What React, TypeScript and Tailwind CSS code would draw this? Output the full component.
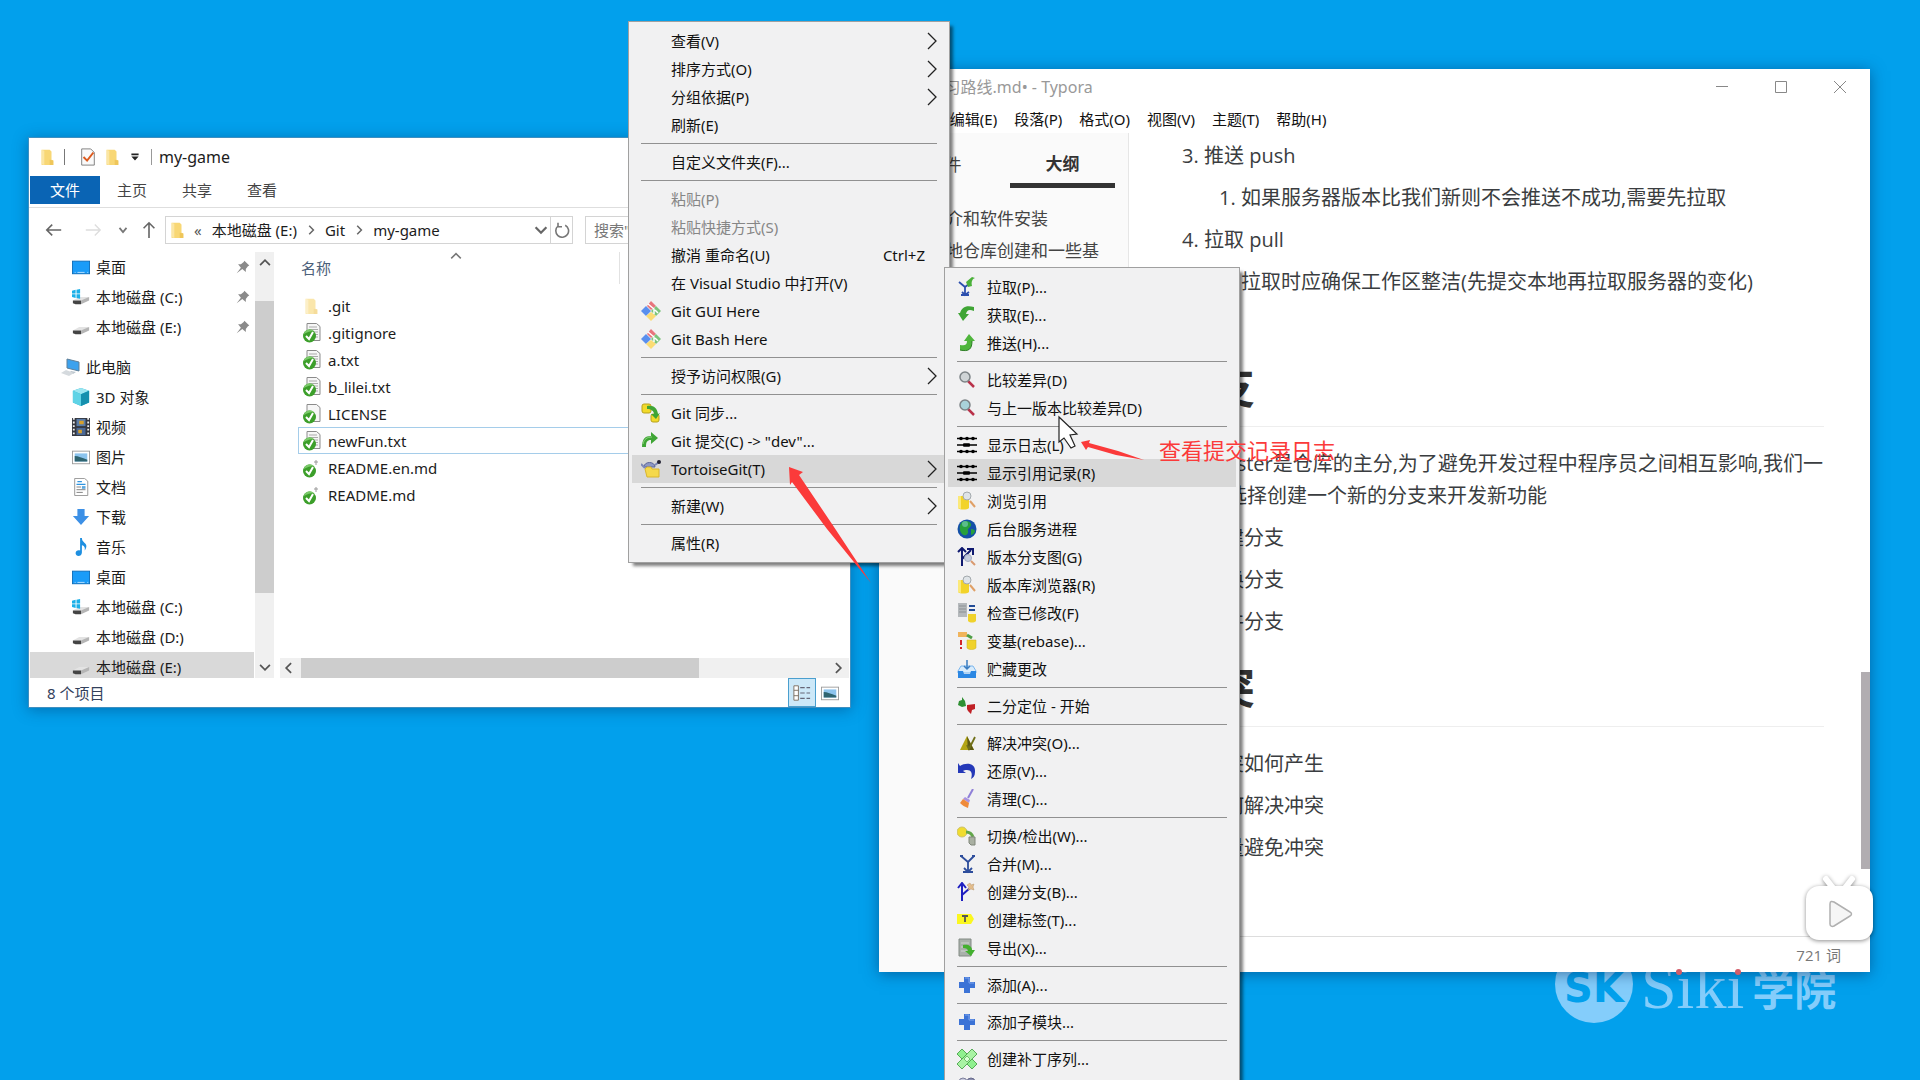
import type { ReactNode } from "react";

type IconProps = { children: ReactNode; className?: string };

const Icon = ({ children, className = "size-5" }: IconProps) => (
  <svg viewBox="0 0 20 20" fill="none" className={`${className} shrink-0`} aria-hidden="true">
    {children}
  </svg>
);

/* ---------- shell icons ---------- */

const Folder = ({ faded = false }: { faded?: boolean }) => (
  <Icon className="size-[18px]">
    <g opacity={faded ? 0.6 : 1}>
      <path d="M4 2h9l2 2v9l2 1v5H4z" fill="#f8d775" />
      <path d="M4 2l3 1v16l-3-1z" fill="#fbe6a4" />
      <path d="M13 13l4 1v5h-4z" fill="#efc65a" />
    </g>
  </Icon>
);

const Desktop = () => (
  <Icon className="size-[18px]">
    <rect x="0.5" y="3.5" width="19" height="14" fill="#1a9cf8" stroke="#0c6cb8" />
    <path d="M3 16h1M6 16h8M17 16h1" stroke="#bfe3ff" />
  </Icon>
);

const Drive = ({ system = false }: { system?: boolean }) => (
  <Icon className="size-[18px]">
    <path d="M1 14l7-4h11l-5 4z" fill="#e3e3e3" />
    <path d="M1 14h9v4H4l-3-1z" fill="#444" />
    <path d="M10 14l9-4v4l-9 4z" fill="#b5b5b5" />
    {system && <path d="M0 3l4-1v4H0zM5 2l4-1v5H5zM0 7h4v4l-4-1zM5 7h4v5l-4-1z" fill="#1cb0e8" />}
  </Icon>
);

const Computer = () => (
  <Icon className="size-5">
    <path d="M6 2l12 3v9L6 11z" fill="#3da2ee" stroke="#5f7f98" />
    <path d="M10 14l5 1-3 2-4-1z" fill="#b9c4cc" />
    <path d="M0 16l5-3 8 3-5 3z" fill="#d5dade" />
  </Icon>
);

const Cube = () => (
  <Icon className="size-[18px]">
    <path d="M10 0l9 3v13l-9 4-9-4V3z" fill="#25b3cf" />
    <path d="M10 0l9 3-9 4-9-4z" fill="#9be6f1" />
    <path d="M10 7l9-4v13l-9 4z" fill="#1590ae" />
    <path d="M1 3l9 4v13l-9-4z" fill="#5fd3e6" />
  </Icon>
);

const Film = () => (
  <Icon className="size-[18px]">
    <rect x="0" y="0" width="20" height="20" fill="#34373f" />
    <path d="M2 0v20M18 0v20" stroke="#eee" strokeWidth="2" strokeDasharray="2 2" />
    <rect x="5" y="1" width="10" height="8" fill="#5a7ca8" />
    <rect x="5" y="11" width="10" height="8" fill="#4a6896" />
    <path d="M8 3h5v4H8zM7 13h4v4H7z" fill="#d6a02c" />
  </Icon>
);

const Picture = () => (
  <Icon className="size-[18px]">
    <rect x="0.5" y="3.5" width="19" height="14" fill="#fff" stroke="#9b9b9b" />
    <path d="M3 6h14v9H3z" fill="#8cc4ee" />
    <path d="M3 9c4 0 8 2 14 4v2H3z" fill="#2f6470" />
  </Icon>
);

const Document = () => (
  <Icon className="size-[18px]">
    <path d="M3 .5h11l3.500 3V19.500H3z" fill="#fff" stroke="#8f8f8f" />
    <path d="M6 4h5M5 7h10" stroke="#2f94e0" strokeWidth="1.500" />
    <path d="M5 10h5M5 13h10M5 16h7" stroke="#777" />
    <path d="M11 9h4v3h-4z" fill="#5ba7df" />
  </Icon>
);

const Download = () => (
  <Icon className="size-[18px]">
    <path d="M6 1h8v8h5l-9 10L1 9h5z" fill="#3c90e6" />
  </Icon>
);

const Music = () => (
  <Icon className="size-[18px]">
    <path d="M9 0h2c0 5 5 5 5 9 0 2-1 4-2 5 1-4-1-6-3-6v8c0 5-7 5-7 1 0-3 3-4 5-3z" fill="#1e8fe0" />
  </Icon>
);

const Pin = () => (
  <Icon className="size-[14px]">
    <path d="M12 1l7 7-2 1-3 4v4l-5-4-8 6 6-8-4-5h4l4-3z" fill="#8a8a8a" />
  </Icon>
);

const TextFile = ({ bare = false, lined = true }: { bare?: boolean; lined?: boolean }) => (
  <Icon className="size-5">
    {!bare && <path d="M5 .5h9.500l3.500 3V17.500H5z" fill="#f6f6f6" stroke="#8b8b8b" />}
    {!bare && lined && <path d="M7 4h8M7 6.500h9M7 9h9M7 11.500h9M12 14h4" stroke="#aaa" />}
    {bare && <path d="M12 4h4M14 2v5" stroke="#9a9a9a" />}
    <circle cx="7.500" cy="13" r="6.500" fill="#3c9f2a" />
    <path d="M2 11a6 6 0 0110-3c-3 0-7 1-10 3z" fill="#7bc96a" />
    <path d="M4 13l3 3 4-7" stroke="#fff" strokeWidth="2" />
  </Icon>
);

const Chevron = ({ className = "size-3 text-[#555]", d = "M5 7l5 6 5-6" }: { className?: string; d?: string }) => (
  <Icon className={className}>
    <path d={d} stroke="currentColor" strokeWidth="2.500" />
  </Icon>
);

/* ---------- context menu icons ---------- */

const GitLogo = () => (
  <Icon>
    <path d="M10 0l5 5-5 4-4-4z" fill="#e8747c" />
    <path d="M5 5l5 5-5 5-5-5z" fill="#5a8fee" />
    <path d="M15 5l5 5-5 5-5-5z" fill="#7cc47c" />
    <path d="M10 11l5 4-5 5-5-5z" fill="#fbdc74" />
    <path d="M7 3l6 5v5M14 9l3 3" stroke="#fff" strokeWidth="1.500" />
  </Icon>
);

const GitSync = () => (
  <Icon>
    <rect x="1" y="1" width="9" height="9" rx="2" fill="#f2da2a" stroke="#b7a21c" />
    <rect x="10" y="11" width="8" height="8" rx="2" fill="#f2da2a" stroke="#b7a21c" />
    <path d="M6 3c7-1 10 2 11 8l2-1-4 6-5-5h3c0-3-3-5-7-5z" fill="#3fa535" />
  </Icon>
);

const GitCommit = () => (
  <Icon>
    <path d="M1 16c0-8 3-11 9-11V1l7 6-7 6V9c-4 0-5 2-5 7z" fill="#3fa535" />
    <path d="M2 13c1-5 4-7 9-7" stroke="#8ad47c" />
  </Icon>
);

const Tortoise = () => (
  <Icon>
    <path d="M3 8c0-6 11-6 11 0z" fill="#8d97c4" stroke="#5c6798" />
    <path d="M0 5l4 4M14 6l4-3" stroke="#7d88b8" strokeWidth="2" />
    <circle cx="18" cy="3" r="2" fill="#223" />
    <path d="M4 10l2-2h4l1 2h7v8H6z" fill="#f5d94c" stroke="#d8b52e" />
  </Icon>
);

const Pull = () => (
  <Icon>
    <path d="M2 5l6 5v8M8 10l4-3M5 15l3 3 4-3M4 18h8" stroke="#2c4fae" strokeWidth="1.800" />
    <path d="M9 5l6-5 3 1c-3 1-4 4-3 8l-4 1z" fill="#4bb13a" />
  </Icon>
);

const Fetch = () => (
  <Icon>
    <path d="M3 8c2-6 6-8 14-6v4c-5-2-7-1-8 3h3l-6 7-5-8z" fill="#3fa535" />
  </Icon>
);

const Push = () => (
  <Icon>
    <path d="M3 12v5c9 2 12-1 12-9h3l-6-7-5 7h3c0 4-2 5-7 4z" fill="#4fb53c" />
    <path d="M3 17c9 2 12-1 12-9" stroke="#2c7d24" />
  </Icon>
);

const Magnifier = ({ glass = "#cfd4d6" }: { glass?: string }) => (
  <Icon>
    <path d="M11 11l6 6" stroke="#b9324a" strokeWidth="2.500" />
    <circle cx="8" cy="7" r="5" fill={glass} stroke="#7d8487" strokeWidth="1.500" />
  </Icon>
);

const LogLines = () => (
  <Icon>
    <path d="M0 3.500h20M0 10h20M0 16.500h20" stroke="#000" strokeWidth="1.300" />
    <g fill="#000">
      <circle cx="4" cy="3.500" r="1.800" />
      <circle cx="10" cy="3.500" r="1.800" />
      <circle cx="16" cy="3.500" r="1.800" />
      <rect x="6" y="8.300" width="7" height="3.400" rx="1" />
      <circle cx="4" cy="16.500" r="1.800" />
      <circle cx="10" cy="16.500" r="1.800" />
      <circle cx="16" cy="16.500" r="1.800" />
    </g>
  </Icon>
);

const RepoBrowse = () => (
  <Icon>
    <path d="M1 5h11v12c-2 2-9 2-11 0z" fill="#f2d32a" />
    <path d="M1 5h3v13l-3-1z" fill="#fbe97a" />
    <path d="M13 10l5 6" stroke="#e0a066" strokeWidth="2" />
    <circle cx="10" cy="5" r="4" fill="#dfe4e8" stroke="#a3a9ad" />
  </Icon>
);

const Globe = () => (
  <Icon>
    <circle cx="10" cy="10" r="9.500" fill="#1450a8" />
    <path d="M5 3c4-2 8-1 9 2s-4 4-3 7-3 6-6 3-3-9 0-12z" fill="#27a03c" />
    <path d="M14 10c2 0 4 1 4 2s-2 4-4 4z" fill="#27a03c" />
    <circle cx="8" cy="5" r="3" fill="#7fd0c0" opacity="0.600" />
  </Icon>
);

const RevisionGraph = () => (
  <Icon>
    <path d="M5 19V1M1 5l4-4 4 4M5 12l9-9M10 2h6v6" stroke="#101a70" strokeWidth="2" />
    <circle cx="11" cy="11" r="3.500" fill="#c5cde0" stroke="#a4adc2" />
    <path d="M14 14l4 4" stroke="#d99a70" strokeWidth="2" />
  </Icon>
);

const CheckModified = () => (
  <Icon>
    <rect x="1" y="0" width="9" height="14" fill="#b4b8bb" />
    <path d="M2 3h7M2 6h7M2 9h7" stroke="#8b9094" />
    <path d="M12 3h6M12 7h6" stroke="#224b96" strokeWidth="2" />
    <path d="M11 11h8v7c-2 2-6 2-8 0z" fill="#f0d22c" />
  </Icon>
);

const Rebase = () => (
  <Icon>
    <path d="M1 1h9v5H1z" fill="#f0b45c" />
    <path d="M10 4l5 3" stroke="#4f9e46" strokeWidth="3" />
    <path d="M4 9v5M4 16v2" stroke="#d3242a" strokeWidth="2" />
    <path d="M10 9h9v8c-2 2-7 2-9 0z" fill="#f0d22c" stroke="#c9ae20" strokeWidth="0.500" />
  </Icon>
);

const Stash = () => (
  <Icon>
    <path d="M4 7h12l3 5v2H1v-2z" fill="#d8ebfb" stroke="#7ab6ee" />
    <path d="M1 12h5l1 3h6l1-3h5v7H1z" fill="#2b87e3" />
    <path d="M10 1v9M7 7l3 3 3-3" stroke="#3a7cc0" strokeWidth="1.500" />
  </Icon>
);

const Bisect = () => (
  <Icon>
    <path d="M5 1l3 4 1 5-4 1-4-2 1-4 3-1z" fill="#2f8f33" />
    <path d="M10 9l8-1v5l-3 1-1 4-3-3-1-2z" fill="#c02026" />
  </Icon>
);

const Resolve = () => (
  <Icon>
    <path d="M10 3l7 14H3z" fill="#b3a515" />
    <path d="M10 3l1 14h6z" fill="#5d5a14" />
    <path d="M10 12l2 4 6-12" stroke="#70701a" strokeWidth="1.800" />
  </Icon>
);

const Revert = () => (
  <Icon>
    <path d="M1 2l2 3c6-4 16-3 15 6 0 4-2 6-4 7 2-6 0-9-4-9-2 0-3 0-4 1l3 2H1z" fill="#2438b8" />
  </Icon>
);

const Cleanup = () => (
  <Icon>
    <path d="M16 0l-5 9" stroke="#8f80d8" strokeWidth="2" />
    <path d="M8 8l5 3-1 3-6-4z" fill="#a993e0" />
    <path d="M6 10l6 4-1 5c-3-1-6-3-8-5z" fill="#ef8a3a" />
  </Icon>
);

const Switch = () => (
  <Icon>
    <circle cx="5" cy="6" r="5" fill="#f0dc30" stroke="#cdc06a" />
    <path d="M9 6c4 0 6 2 7 5" stroke="#62a64a" strokeWidth="3" />
    <path d="M12 11h6v8h-4l-2-2z" fill="#a9b0a2" stroke="#80877b" />
  </Icon>
);

const Merge = () => (
  <Icon>
    <path d="M4 2l7 6v9M17 2l-6 6M7 14l4 4 4-4M6 18h10M3 2h3M15 2h3" stroke="#2d4d9c" strokeWidth="1.800" />
  </Icon>
);

const CreateBranch = () => (
  <Icon>
    <path d="M5 19V1M1 6l4-5 4 5M5 13l8-7" stroke="#1f1fc0" strokeWidth="2" />
    <path d="M13 1l1 2 3-1-1 3 1 3-3-1-3 1 1-3-2-2z" fill="#e3bd8c" stroke="#b99568" strokeWidth="0.500" />
  </Icon>
);

const Tag = () => (
  <Icon>
    <path d="M0 4h14l3 5-3 5H0z" fill="#fbf720" />
    <path d="M5 6h6M8 6v6" stroke="#555" strokeWidth="1.800" />
  </Icon>
);

const Export = () => (
  <Icon>
    <path d="M2 1h12v17H2z" fill="#a9b1ab" stroke="#828a84" />
    <path d="M4 5h8M4 9h6M4 13h6" stroke="#cfd5d1" strokeWidth="1.200" />
    <path d="M6 7c5-1 9 1 9 5h3l-4 6-6-5h3c0-2-2-3-5-3z" fill="#43b02f" />
  </Icon>
);

const Plus = () => (
  <Icon>
    <path d="M7 2h6v5h5v6h-5v5H7v-5H2V7h5z" fill="#3c73d6" />
    <path d="M8 3h4v5h5" stroke="#7fa6ec" />
  </Icon>
);

const Patch = () => (
  <Icon>
    <path d="M5 0l15 15-5 5L0 5z" fill="#8ff08f" stroke="#3b9a3b" strokeWidth="0.800" />
    <path d="M15 0l5 5L5 20l-5-5z" fill="#a9f3a4" stroke="#3b9a3b" strokeWidth="0.800" />
    <path d="M10 7l3 3-3 3-3-3z" fill="#d9ffd5" stroke="#3b9a3b" strokeWidth="0.600" />
  </Icon>
);

const PatchApply = () => (
  <Icon>
    <circle cx="6" cy="5" r="4" fill="#c7c9dc" stroke="#7d7f9c" />
    <circle cx="14" cy="5" r="4" fill="#8c8fae" stroke="#64678a" />
  </Icon>
);

/* ---------- menus ---------- */

type Item = {
  label?: string;
  icon?: ReactNode;
  sub?: boolean;
  disabled?: boolean;
  active?: boolean;
  keys?: string;
};

const sep: Item = {};

const mainMenu: Item[] = [
  { label: "查看(V)", sub: true },
  { label: "排序方式(O)", sub: true },
  { label: "分组依据(P)", sub: true },
  { label: "刷新(E)" },
  sep,
  { label: "自定义文件夹(F)..." },
  sep,
  { label: "粘贴(P)", disabled: true },
  { label: "粘贴快捷方式(S)", disabled: true },
  { label: "撤消 重命名(U)", keys: "Ctrl+Z" },
  { label: "在 Visual Studio 中打开(V)" },
  { label: "Git GUI Here", icon: <GitLogo /> },
  { label: "Git Bash Here", icon: <GitLogo /> },
  sep,
  { label: "授予访问权限(G)", sub: true },
  sep,
  { label: "Git 同步...", icon: <GitSync /> },
  { label: 'Git 提交(C) -> "dev"...', icon: <GitCommit /> },
  { label: "TortoiseGit(T)", icon: <Tortoise />, sub: true, active: true },
  sep,
  { label: "新建(W)", sub: true },
  sep,
  { label: "属性(R)" },
];

const tortoiseMenu: Item[] = [
  { label: "拉取(P)...", icon: <Pull /> },
  { label: "获取(E)...", icon: <Fetch /> },
  { label: "推送(H)...", icon: <Push /> },
  sep,
  { label: "比较差异(D)", icon: <Magnifier /> },
  { label: "与上一版本比较差异(D)", icon: <Magnifier glass="#a9d3da" /> },
  sep,
  { label: "显示日志(L)", icon: <LogLines /> },
  { label: "显示引用记录(R)", icon: <LogLines />, active: true },
  { label: "浏览引用", icon: <RepoBrowse /> },
  { label: "后台服务进程", icon: <Globe /> },
  { label: "版本分支图(G)", icon: <RevisionGraph /> },
  { label: "版本库浏览器(R)", icon: <RepoBrowse /> },
  { label: "检查已修改(F)", icon: <CheckModified /> },
  { label: "变基(rebase)...", icon: <Rebase /> },
  { label: "贮藏更改", icon: <Stash /> },
  sep,
  { label: "二分定位 - 开始", icon: <Bisect /> },
  sep,
  { label: "解决冲突(O)...", icon: <Resolve /> },
  { label: "还原(V)...", icon: <Revert /> },
  { label: "清理(C)...", icon: <Cleanup /> },
  sep,
  { label: "切换/检出(W)...", icon: <Switch /> },
  { label: "合并(M)...", icon: <Merge /> },
  { label: "创建分支(B)...", icon: <CreateBranch /> },
  { label: "创建标签(T)...", icon: <Tag /> },
  { label: "导出(X)...", icon: <Export /> },
  sep,
  { label: "添加(A)...", icon: <Plus /> },
  sep,
  { label: "添加子模块...", icon: <Plus /> },
  sep,
  { label: "创建补丁序列...", icon: <Patch /> },
  { icon: <PatchApply />, label: " " },
];

const Menu = ({ items, className }: { items: Item[]; className: string }) => (
  <div
    role="menu"
    className={`absolute flex flex-col border border-[#a0a0a0] bg-[#f1f1f2] py-[5px] shadow-[4px_4px_3px_-1px_rgba(0,0,0,0.5)] ${className}`}
  >
    {items.map((item, i) =>
      item.label ? (
        <button
          key={i}
          role="menuitem"
          disabled={item.disabled}
          className={`mx-[3px] flex h-7 items-center pr-[9px] pl-[9px] text-left text-[15px] leading-5 whitespace-nowrap ${
            item.active ? "bg-[#d8d8d8]" : ""
          } ${item.disabled ? "text-[#868686]" : "text-[#111]"}`}
        >
          <span className="mr-2.5 flex w-5 shrink-0">{item.icon}</span>
          <span>{item.label}</span>
          {item.keys && <span className="mr-3 ml-auto">{item.keys}</span>}
          {item.sub && (
            <svg viewBox="0 0 10 18" fill="none" className="ml-auto h-[18px] w-2.5">
              <path d="M1 1l8 8-8 8" stroke="#222" strokeWidth="1.300" />
            </svg>
          )}
        </button>
      ) : (
        <div key={i} role="separator" className="mx-3 my-1 h-px bg-[#919191]" />
      ),
    )}
  </div>
);

/* ---------- file explorer ---------- */

const places = [
  { label: "桌面", icon: <Desktop />, pinned: true },
  { label: "本地磁盘 (C:)", icon: <Drive system />, pinned: true },
  { label: "本地磁盘 (E:)", icon: <Drive />, pinned: true },
];

const devices = [
  { label: "3D 对象", icon: <Cube /> },
  { label: "视频", icon: <Film /> },
  { label: "图片", icon: <Picture /> },
  { label: "文档", icon: <Document /> },
  { label: "下载", icon: <Download /> },
  { label: "音乐", icon: <Music /> },
  { label: "桌面", icon: <Desktop /> },
  { label: "本地磁盘 (C:)", icon: <Drive system /> },
  { label: "本地磁盘 (D:)", icon: <Drive /> },
  { label: "本地磁盘 (E:)", icon: <Drive />, active: true },
];

const files = [
  { name: ".git", icon: <Folder faded /> },
  { name: ".gitignore", icon: <TextFile /> },
  { name: "a.txt", icon: <TextFile /> },
  { name: "b_lilei.txt", icon: <TextFile /> },
  { name: "LICENSE", icon: <TextFile lined={false} /> },
  { name: "newFun.txt", icon: <TextFile />, active: true },
  { name: "README.en.md", icon: <TextFile bare /> },
  { name: "README.md", icon: <TextFile bare /> },
];

type PlaceProps = { label: string; icon: ReactNode; pinned?: boolean; active?: boolean };

const Place = ({ label, icon, pinned, active }: PlaceProps) => (
  <button className={`flex h-[30px] w-full shrink-0 items-center gap-1.5 pr-1 pl-[42px] ${active ? "bg-[#d9d9d9]" : ""}`}>
    {icon}
    <span>{label}</span>
    {pinned && (
      <span className="ml-auto">
        <Pin />
      </span>
    )}
  </button>
);

const Explorer = () => (
  <section className="absolute top-[137px] left-[28px] w-[823px] border border-[#3f8fc0] bg-white text-[15px] leading-5 text-[#1c1c1c] shadow-[0_2px_14px_rgba(0,40,90,0.4)]">
    <header className="flex h-[38px] items-center pl-[9px]">
      <Folder />
      <span className="ml-2 h-4 w-px bg-[#777]" />
      <Icon className="ml-3.5 size-[18px]">
        <path d="M3 1h10l4 4v14H3z" fill="#fafafa" stroke="#777" />
        <path d="M5 10l4 4 7-9" stroke="#dc5a1e" strokeWidth="2.200" />
      </Icon>
      <span className="ml-1.5">
        <Folder />
      </span>
      <Icon className="ml-2 size-3">
        <path d="M4 4h12v3H4zM4 9h12l-6 7z" fill="#222" />
      </Icon>
      <span className="ml-2.5 h-4 w-px bg-[#999]" />
      <h1 className="ml-[7px] text-base">my-game</h1>
    </header>

    <nav className="flex h-8 items-start border-b border-[#dedede] pl-px text-[#444]">
      <button className="h-7 w-[70px] bg-[#0a64b4] text-white">文件</button>
      <button className="h-7 w-[65px] pl-[17px] text-left">主页</button>
      <button className="h-7 w-[65px] pl-[17px] text-left">共享</button>
      <button className="h-7 w-[65px] pl-[17px] text-left">查看</button>
    </nav>

    <div className="flex h-11 items-center overflow-hidden pb-px pl-4">
      <button aria-label="后退">
        <Icon className="size-[18px]">
          <path d="M18 10H2M8 4l-6 6 6 6" stroke="#666" strokeWidth="1.800" />
        </Icon>
      </button>
      <button aria-label="前进" className="ml-[21px]">
        <Icon className="size-[18px]">
          <path d="M2 10h16M12 4l6 6-6 6" stroke="#ddd" strokeWidth="1.500" />
        </Icon>
      </button>
      <button aria-label="最近" className="ml-3.5">
        <Chevron className="size-[14px] text-[#777]" />
      </button>
      <button aria-label="上移" className="ml-2.5">
        <Icon className="size-[18px]">
          <path d="M10 19V2M4 8l6-6 6 6" stroke="#666" strokeWidth="1.800" />
        </Icon>
      </button>
      <div className="ml-[7px] flex h-7 w-[408px] items-center border border-[#d4d4d4] pl-[2px]">
        <Folder />
        <span className="ml-2 text-[#555]">«</span>
        <span className="ml-2.5">本地磁盘 (E:)</span>
        <Chevron className="ml-2 size-3 text-[#666]" d="M7 3l7 7-7 7" />
        <span className="ml-2">Git</span>
        <Chevron className="ml-2 size-3 text-[#666]" d="M7 3l7 7-7 7" />
        <span className="ml-2">my-game</span>
        <span className="ml-auto">
          <Chevron className="size-[18px] text-[#666]" d="M4 7l6 6 6-6" />
        </span>
        <button aria-label="刷新" className="flex h-full w-[22px] items-center justify-center border-l border-[#d4d4d4]">
          <Icon className="size-4">
            <path d="M14 4a8 8 0 11-9 1M5 1v5h5" stroke="#777" strokeWidth="2" />
          </Icon>
        </button>
      </div>
      <input
        aria-label="搜索"
        placeholder={'搜索"my-game"'}
        className="ml-3 h-7 w-[254px] border border-[#d4d4d4] px-2 placeholder:text-[#777]"
      />
    </div>

    <div className="flex h-[426px]">
      <aside className="flex w-[226px] shrink-0 flex-col overflow-hidden pr-px pl-px">
        {places.map((p) => (
          <Place key={p.label} {...p} />
        ))}
        <button className="mt-2.5 flex h-[30px] shrink-0 items-center gap-[5px] pl-[31px]">
          <Computer />
          <span>此电脑</span>
        </button>
        {devices.map((d) => (
          <Place key={d.label} {...d} />
        ))}
      </aside>
      <div className="flex w-[19px] shrink-0 flex-col items-center bg-[#f0f0f0]">
        <Chevron className="mt-1 size-[14px] text-[#555]" d="M3 13l7-7 7 7" />
        <div className="mt-[31px] h-[292px] w-full bg-[#cdcdcd]" />
        <Chevron className="mt-auto mb-1 size-[14px] text-[#555]" d="M3 7l7 7 7-7" />
      </div>

      <div className="flex min-w-0 flex-1 flex-col pl-1.5">
        <table className="ml-[18px] w-[550px] border-separate border-spacing-0 text-left">
          <thead>
            <tr>
              <th className="h-10 pb-2 pl-[3px] font-normal text-[#4c607a]">
                <div className="mr-[228px] flex h-8 items-center border-r border-[#e2e2e2]">
                  <span>名称</span>
                  <span className="mb-6 ml-[119px]">
                    <Chevron className="size-3 text-[#777]" d="M2 14l8-8 8 8" />
                  </span>
                </div>
              </th>
            </tr>
          </thead>
          <tbody>
            {files.map((f) => (
              <tr key={f.name}>
                <td className={`h-[27px] border p-0 ${f.active ? "border-[#a5cdea]" : "border-transparent"}`}>
                  <div className="flex items-center pl-[3px]">
                    <span className="flex w-[26px]">{f.icon}</span>
                    {f.name}
                  </div>
                </td>
              </tr>
            ))}
          </tbody>
        </table>
        <div className="mt-auto mr-px flex h-5 items-center bg-[#f0f0f0]">
          <Chevron className="ml-0.5 size-[14px] text-[#555]" d="M13 3l-7 7 7 7" />
          <div className="ml-[5px] h-full w-[398px] bg-[#cdcdcd]" />
          <Chevron className="mr-1 ml-auto size-[14px] text-[#555]" d="M7 3l7 7-7 7" />
        </div>
      </div>
    </div>

    <footer className="flex h-[29px] items-center pr-[11px] pl-[18px] text-[#33415c]">
      <span>8 个项目</span>
      <button aria-label="详细信息" className="ml-auto flex h-[29px] w-7 items-center justify-center border border-[#4a9fcf] bg-[#cce8f8]">
        <Icon className="size-[18px]">
          <path d="M1 2h5v16H1zM1 7h5M1 13h5" stroke="#776a5c" fill="#fff" />
          <path d="M8 4h5M15 4h4M8 10h5M15 10h4M8 16h5M15 16h4" stroke="#667" strokeWidth="1.300" />
        </Icon>
      </button>
      <button aria-label="大图标" className="ml-[5px]">
        <Picture />
      </button>
    </footer>
  </section>
);

/* ---------- editor ---------- */

const menus = ["文件(F)", "编辑(E)", "段落(P)", "格式(O)", "视图(V)", "主题(T)", "帮助(H)"];

const Editor = () => (
  <section className="absolute top-[69px] left-[879px] flex h-[903px] w-[991px] flex-col bg-white shadow-[0_2px_14px_rgba(0,40,90,0.5)]">
    <header className="flex h-9 items-center pr-6 pl-7 text-base leading-5 text-[#999]">
      <span>Git学习路线.md• - Typora</span>
      <div className="ml-auto flex items-center gap-[47px] text-[#888]">
        <button aria-label="最小化">
          <svg viewBox="0 0 12 12" className="size-3">
            <path d="M0 5.500h12" stroke="currentColor" />
          </svg>
        </button>
        <button aria-label="最大化">
          <svg viewBox="0 0 12 12" fill="none" className="size-3">
            <path d="M.5 .5h11v11H.5z" stroke="currentColor" />
          </svg>
        </button>
        <button aria-label="关闭">
          <svg viewBox="0 0 12 12" className="size-3">
            <path d="M0 0l12 12M12 0L0 12" stroke="currentColor" />
          </svg>
        </button>
      </div>
    </header>
    <nav className="flex h-7 items-center gap-[17px] pl-[7px] text-[15px] leading-5 text-[#111]">
      {menus.map((m) => (
        <button key={m}>{m}</button>
      ))}
    </nav>

    <div className="flex min-h-0 flex-1 font-['Open_Sans','Noto_Sans_CJK_SC',sans-serif]">
      <aside className="w-[250px] shrink-0 border-r border-[#e6e6e6] bg-[#fafafa] text-[17px] leading-8 text-[#444]">
        <div className="flex justify-between px-[13px] pt-3">
          <button className="h-[43px] w-[105px] pb-1">文件</button>
          <button className="h-[43px] w-[105px] border-b-[5px] border-[#333] font-bold text-[#333]">大纲</button>
        </div>
        <ul className="pt-[15px] pl-[50px] whitespace-nowrap">
          <li>简介和软件安装</li>
          <li>本地仓库创建和一些基</li>
        </ul>
      </aside>

      <div className="flex min-w-0 flex-1 flex-col">
        <main className="relative min-h-0 flex-1 overflow-hidden pr-[46px] pl-[38px] text-[20px] leading-8 text-[#3a3d40]">
          <ol start={3} className="flex list-decimal flex-col gap-2.5 pt-[7px] pl-[37px]">
            <li>
              推送 push
              <ol className="mt-2.5 list-decimal pl-[37px]">
                <li>如果服务器版本比我们新则不会推送不成功,需要先拉取</li>
              </ol>
            </li>
            <li>
              拉取 pull
              <ol className="mt-2.5 list-decimal pl-[37px]">
                <li>拉取时应确保工作区整洁(先提交本地再拉取服务器的变化)</li>
              </ol>
            </li>
          </ol>
          <h2 className="mt-[61px] border-b border-[#eee] pb-[11px] text-[44px] leading-[56px] font-bold text-[#333]">分支</h2>
          <p className="mt-[21px] whitespace-nowrap">
            默认master是仓库的主分,为了避免开发过程中程序员之间相互影响,我们一
            <br />
            般都会选择创建一个新的分支来开发新功能
          </p>
          <ol className="mt-2.5 flex list-decimal flex-col gap-2.5 pl-[37px]">
            <li>新建分支</li>
            <li>切换分支</li>
            <li>合并分支</li>
          </ol>
          <h2 className="mt-[21px] border-b border-[#eee] pb-[11px] text-[44px] leading-[56px] font-bold text-[#333]">冲突</h2>
          <ol className="mt-[21px] flex list-decimal flex-col gap-2.5 pl-[37px]">
            <li>冲突如何产生</li>
            <li>如何解决冲突</li>
            <li>尽量避免冲突</li>
          </ol>
          <div className="absolute right-0 bottom-[67px] h-[197px] w-[9px] bg-[#b1adb1]" />
        </main>
        <footer className="flex h-9 items-center justify-end border-t border-[#ddd] pr-[29px] text-[15px] leading-5 text-[#777]">
          721 词
        </footer>
      </div>
    </div>
  </section>
);

/* ---------- overlays ---------- */

const Watermark = () => (
  <div className="absolute top-[945px] left-[1555px] flex items-center gap-2 text-[#84cdfb]">
    <div className="flex size-[78px] items-center justify-center rounded-full bg-[#84cdfb] pt-2 font-['DejaVu_Sans',sans-serif] text-[40px] leading-none font-bold text-[#02a0ec]">
      SK
    </div>
    <span className="pt-1.5 font-['Liberation_Serif',serif] text-[64px] leading-[72px]">Siki</span>
    <span className="pt-3 text-[42px] leading-[48px] font-bold">学院</span>
  </div>
);

const PlayBadge = () => (
  <svg viewBox="0 0 80 80" className="absolute top-[869px] left-[1799px] size-20 drop-shadow-[0_1px_2px_rgba(0,0,0,0.45)]">
    <path d="M27 10l7 9M53 10l-7 9" stroke="#fff" strokeWidth="6" strokeLinecap="round" />
    <rect x="7" y="17" width="67" height="54" rx="13" fill="#fff" />
    <path d="M31 35c0-3 2-3 4-2l16 10c2 1 2 3 0 4L35 57c-2 1-4 0-4-2z" fill="#f6f6f6" stroke="#b0b0b0" strokeWidth="1.500" />
  </svg>
);

const Annotations = () => (
  <div className="pointer-events-none absolute inset-0 text-[#fb3a3a]">
    <svg className="absolute top-0 left-0 h-full w-full" aria-hidden="true">
      <path d="M1059 417l0 25 5-4 7 10 4-2-5-11 7-1z" fill="#fff" stroke="#222" strokeWidth="1.200" />
      <path d="M789 467l14 5-4 3 33 49 39 59-44-54-35-47-2 3z" fill="currentColor" />
      <path d="M1081 442l9-2-1 3 29 8 26 9-28-5-28-8-2 3z" fill="currentColor" />
      <circle cx="1679" cy="972" r="3" fill="#d35c68" />
      <circle cx="1738" cy="972" r="3" fill="#d35c68" />
    </svg>
    <span className="absolute top-[434px] left-[1159px] text-[22px] leading-8 whitespace-nowrap">查看提交记录日志</span>
  </div>
);

export default function App() {
  return (
    <div className="relative h-screen w-full overflow-hidden bg-[#02a0ec] font-['Noto_Sans','Noto_Sans_CJK_SC',sans-serif]">
      <Explorer />
      <Watermark />
      <Editor />
      <Menu items={mainMenu} className="top-[21px] left-[628px] w-[322px]" />
      <Menu items={tortoiseMenu} className="top-[267px] left-[944px] w-[296px]" />
      <PlayBadge />
      <Annotations />
    </div>
  );
}
